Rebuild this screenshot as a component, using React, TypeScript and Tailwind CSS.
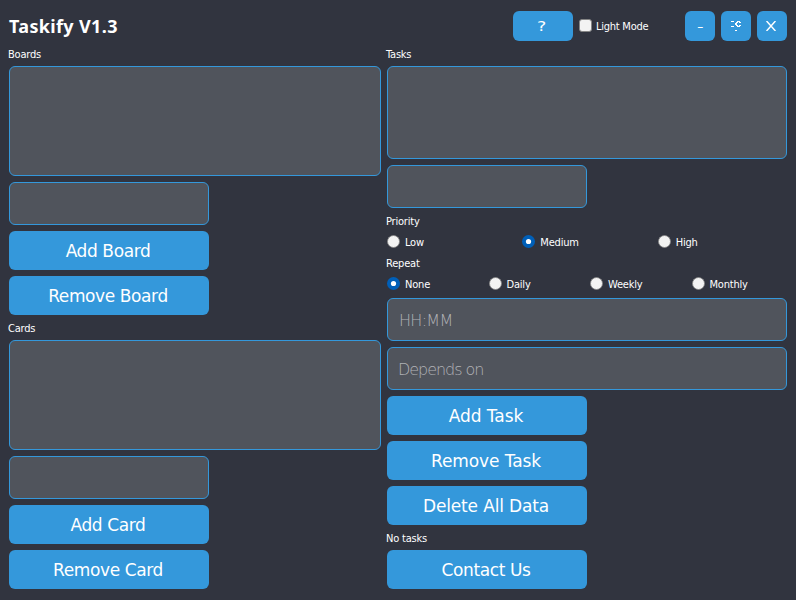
import React from "react";

const bigFont = "font-['DejaVu_Sans','Liberation_Sans',sans-serif] [font-stretch:normal]";
const smallFont =
  "font-['DejaVu_Sans_Condensed','DejaVu_Sans','Liberation_Sans',sans-serif] [font-stretch:condensed]";
const fieldStyle = "block rounded-[6px] border border-[#3498db] bg-[#50545c] outline-none";

function Label({ text, tall = false }: { text: string; tall?: boolean }) {
  return (
    <div className={`${tall ? "h-[15px] leading-[15px]" : "h-[13px] leading-[15px]"} -ml-px whitespace-nowrap tracking-[-0.2px]`}>
      {text}
    </div>
  );
}

function ActionButton({ text, track = "tracking-[-0.4px]" }: { text: string; track?: string }) {
  return (
    <button className={`h-[39px] w-[200px] shrink-0 rounded-[6px] bg-[#3498db] pt-[3px] pr-[2px] text-[17px] ${bigFont} ${track}`}>
      {text}
    </button>
  );
}

function Radio({ text, checked = false }: { text: string; checked?: boolean }) {
  return (
    <div className="flex h-[15px] items-center gap-[5px] whitespace-nowrap">
      <svg width="13" height="13" viewBox="0 0 13 13" className="-mt-[2px] shrink-0">
        {checked ? (
          <>
            <circle cx="6.5" cy="6.5" r="6.5" fill="#005fb8" />
            <circle cx="6.5" cy="6.5" r="2.6" fill="#fff" />
          </>
        ) : (
          <circle cx="6.5" cy="6.5" r="6" fill="#f3f3f3" stroke="#868686" strokeWidth="0.8" />
        )}
      </svg>
      <span className="pt-[2px] tracking-[-0.2px]">{text}</span>
    </div>
  );
}

export default function App() {
  return (
    <div className={`h-[600px] w-[796px] overflow-hidden bg-[#31343f] pr-[9px] pl-[9px] text-[11px] text-white ${smallFont}`}>
      <header className="flex h-[47px] items-center pt-[5px]">
        <h1 className="w-[504px] whitespace-nowrap font-['Noto_Sans','Open_Sans',sans-serif] text-[18px] font-bold leading-none tracking-[0.35px] [font-stretch:normal]">
          Taskify V1.3
        </h1>
        <button className="flex h-[30px] w-[60px] items-center justify-center rounded-[6px] bg-[#3498db] pr-[2px] font-['DejaVu_Sans',sans-serif] text-[14px] [font-stretch:normal]">
          <span className="inline-block scale-x-125">?</span>
        </button>
        <span className="mt-[-2px] ml-[6px] h-[13px] w-[13px] rounded-[3px] border border-[#868686] bg-[#f3f3f3]" />
        <span className="ml-[4px] w-[89px] whitespace-nowrap pt-[3px] tracking-[-0.25px]">Light Mode</span>
        <div className="flex gap-[6px]">
          <button className={`h-[30px] w-[30px] rounded-[6px] bg-[#3498db] pt-[2px] text-[13px] ${bigFont}`}>
            <span className="inline-block scale-x-140">-</span>
          </button>
          <button className="flex h-[30px] w-[30px] items-center justify-center rounded-[6px] bg-[#3498db] pb-px">
            <svg width="12" height="12" viewBox="0 0 12 12" fill="#fff" shapeRendering="crispEdges">
              <path d="M1 1h3v1H1zM1 6h3v1H1zM5 10h2v1H5zM7 1h3v1H7zM9 2h2v1H9zM6 2h2v1H6zM5 3h2v2H5zM6 5h2v1H6zM7 6h3v1H7zM9 5h2v1H9z" />
            </svg>
          </button>
          <button className="flex h-[30px] w-[30px] items-center justify-center rounded-[6px] bg-[#3498db] pr-[2px]">
            <svg width="10" height="10" viewBox="0 0 10 10" stroke="#fff" strokeWidth="1.5">
              <path d="M.5 0l9 10M9.5 0l-9 10" />
            </svg>
          </button>
        </div>
      </header>
      <main className="flex gap-[6px]">
        <section className="flex w-[372px] flex-col gap-[6px]">
          <Label text="Boards" />
          <div className={`h-[110px] ${fieldStyle}`} />
          <input className={`h-[43px] w-[200px] ${fieldStyle}`} />
          <ActionButton text="Add Board" />
          <ActionButton text="Remove Board" />
          <Label text="Cards" />
          <div className={`h-[110px] ${fieldStyle}`} />
          <input className={`h-[43px] w-[200px] ${fieldStyle}`} />
          <ActionButton text="Add Card" />
          <ActionButton text="Remove Card" />
        </section>
        <section className="flex w-[400px] flex-col gap-[6px]">
          <Label text="Tasks" />
          <div className={`h-[93px] ${fieldStyle}`} />
          <input className={`h-[43px] w-[200px] ${fieldStyle}`} />
          <Label text="Priority" tall />
          <div className="grid grid-cols-3 gap-[6px]">
            <Radio text="Low" />
            <Radio text="Medium" checked />
            <Radio text="High" />
          </div>
          <Label text="Repeat" tall />
          <div className="grid grid-cols-4 gap-[6px]">
            <Radio text="None" checked />
            <Radio text="Daily" />
            <Radio text="Weekly" />
            <Radio text="Monthly" />
          </div>
          <input
            placeholder="HH:MM"
            className={`h-[43px] px-[11px] pt-[2px] text-[16px] font-extralight tracking-[-0.7px] placeholder:text-[#b0b2b6] ${bigFont} ${fieldStyle}`}
          />
          <input
            placeholder="Depends on"
            className={`h-[43px] px-[10px] pt-[2px] text-[16px] font-extralight tracking-[-1.05px] placeholder:text-[#b0b2b6] ${bigFont} ${fieldStyle}`}
          />
          <ActionButton text="Add Task" track="tracking-[-0.05px]" />
          <ActionButton text="Remove Task" track="tracking-[-0.1px]" />
          <ActionButton text="Delete All Data" track="tracking-[-0.15px]" />
          <Label text="No tasks" />
          <ActionButton text="Contact Us" />
        </section>
      </main>
    </div>
  );
}
